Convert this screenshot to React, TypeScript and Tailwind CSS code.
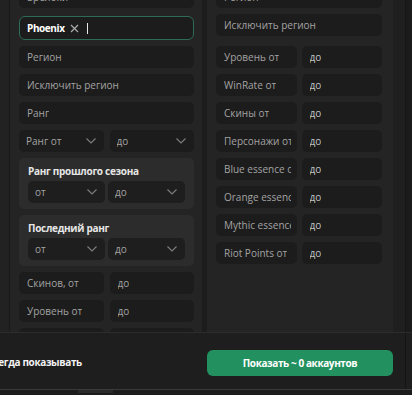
import React from "react";

const Chevron = () => (
  <svg width="10" height="6" viewBox="0 0 10 6" className="shrink-0">
    <polyline points="0.5,0.5 5,5 9.5,0.5" fill="none" stroke="#7c7c7c" strokeWidth="1.2" />
  </svg>
);

const Input = ({ text, light }: { text: string; light?: boolean }) => (
  <div
    className={`h-[22px] min-w-0 flex-1 bg-[#1c1c1c] rounded-[5px] pl-[8px] pr-[6px] flex items-center ${
      light ? "text-[#c4c4c4]" : "text-[#a3a3a3]"
    }`}
  >
    <span className="min-w-0 overflow-hidden whitespace-nowrap">{text}</span>
  </div>
);

const Select = ({ text, dark }: { text: string; dark?: boolean }) => (
  <div
    className={`h-[22px] min-w-0 flex-1 rounded-[5px] pl-[7px] pr-[8px] flex items-center justify-between ${
      dark ? "bg-[#1e1e1e]" : "bg-[#1c1c1c]"
    } text-[#a3a3a3]`}
  >
    <span className="whitespace-nowrap overflow-hidden">{text}</span>
    <Chevron />
  </div>
);

const Group = ({ title }: { title: string }) => (
  <div className="bg-[#2c2c2c] rounded-[5px] px-[9px] pt-[6px] pb-[5px] flex flex-col gap-[3px]">
    <div className="h-[14px] leading-[14px] font-bold tracking-[-0.3px] text-[#e6e6e6]">{title}</div>
    <div className="flex gap-[3px]">
      <div className="h-[23px] flex flex-1">
        <Select text="от" dark />
      </div>
      <div className="h-[23px] flex flex-1">
        <Select text="до" dark />
      </div>
    </div>
  </div>
);

export default function App() {
  return (
    <div className="w-[412px] h-[395px] overflow-hidden bg-[#1e1e1e] flex flex-col text-[10px] font-['Open_Sans','Noto_Sans',sans-serif]">
      <div className="h-[332px] flex shrink-0">
        <div className="w-[10px] bg-[#222222] border-r border-[#1a1a1a]" />
        <div className="w-[192px] bg-[#242424] overflow-hidden pl-[9px] pr-[8px]">
          <div className="mt-[-14px] flex flex-col gap-[6px]">
            <div className="flex">
              <Input text="Брелоки" />
            </div>
            <div className="mt-[2px] h-[24px] rounded-[6px] border border-[#2e6b54] bg-[#1c1c1c] px-[7px] flex items-center gap-[5px]">
              <span className="font-bold tracking-[-0.4px] text-white">Phoenix</span>
              <svg width="9" height="9" viewBox="0 0 9 9">
                <path d="M1 1L8 8M8 1L1 8" stroke="#a8a8a8" strokeWidth="1.3" />
              </svg>
              <span className="ml-[3px] w-px h-[11px] bg-[#e8e8e8]" />
            </div>
            <div className="flex">
              <Input text="Регион" />
            </div>
            <div className="flex">
              <Input text="Исключить регион" />
            </div>
            <div className="flex">
              <Input text="Ранг" />
            </div>
            <div className="flex gap-[6px]">
              <Select text="Ранг от" />
              <Select text="до" />
            </div>
            <Group title="Ранг прошлого сезона" />
            <Group title="Последний ранг" />
            <div className="flex gap-[6px]">
              <Input text="Скинов, от" />
              <Input text="до" />
            </div>
            <div className="flex gap-[6px]">
              <Input text="Уровень от" />
              <Input text="до" />
            </div>
            <div className="flex gap-[6px]">
              <Input text="WinRate от" />
              <Input text="до" />
            </div>
          </div>
        </div>
        <div className="w-[5px] bg-[#1c1c1c]" />
        <div className="w-[186px] bg-[#242424] overflow-hidden pl-[9px] pr-[11px]">
          <div className="mt-[-14px] flex flex-col gap-[6px]">
            <div className="flex">
              <Input text="Регион" />
            </div>
            <div className="flex">
              <Input text="Исключить регион" />
            </div>
            <div className="mt-[4px] flex gap-[5px]">
              <Input text="Уровень от" />
              <Input text="до" light />
            </div>
            <div className="flex gap-[5px]">
              <Input text="WinRate от" />
              <Input text="до" light />
            </div>
            <div className="flex gap-[5px]">
              <Input text="Скины от" />
              <Input text="до" light />
            </div>
            <div className="flex gap-[5px]">
              <Input text="Персонажи от" />
              <Input text="до" light />
            </div>
            <div className="flex gap-[5px]">
              <Input text="Blue essence от" />
              <Input text="до" light />
            </div>
            <div className="flex gap-[5px]">
              <Input text="Orange essence от" />
              <Input text="до" light />
            </div>
            <div className="flex gap-[5px]">
              <Input text="Mythic essence от" />
              <Input text="до" light />
            </div>
            <div className="flex gap-[5px]">
              <Input text="Riot Points от" />
              <Input text="до" light />
            </div>
          </div>
        </div>
        <div className="w-[12px] bg-[#1f1f1f]" />
        <div className="flex-1 bg-[#1b1b1b] border-l border-[#151515]" />
      </div>
      <div className="h-[57px] shrink-0 flex border-t border-[#2c2c2c]">
        <div className="w-[207px] flex items-center">
          <span className="ml-[-13px] mt-[2px] font-bold tracking-[-0.35px] text-[#f2f2f2] whitespace-nowrap">Всегда показывать</span>
        </div>
        <div className="w-[186px] pt-[17px]">
          <div className="h-[26px] rounded-[6px] bg-[#22915f] flex items-center justify-center font-bold tracking-[-0.4px] text-white">
            Показать ~ 0 аккаунтов
          </div>
        </div>
        <div className="w-[12px]" />
        <div className="flex-1 border-l border-[#151515]" />
      </div>
      <div className="flex-1 border-t border-[#3a3a3a] bg-[#1c1c1c] flex">
        <div className="ml-[78px] w-[35px] h-[3px] bg-[#2a2a2a]" />
      </div>
    </div>
  );
}
